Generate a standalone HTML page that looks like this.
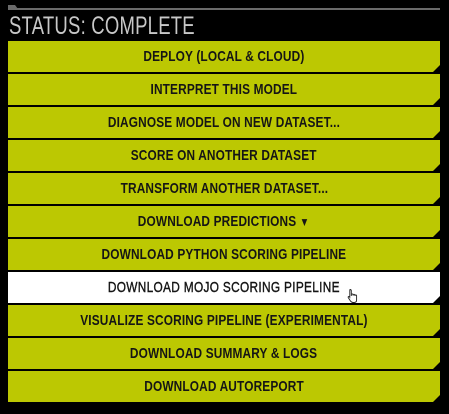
<!DOCTYPE html>
<html><head><style>
html,body{margin:0;padding:0;background:#000;width:449px;height:414px;overflow:hidden}
.top{position:absolute;left:8px;top:8px;width:432px;height:2px;background:#6a6a6a}
.tab{position:absolute;left:8px;top:5px;width:10px;height:4px;background:#6a6a6a;clip-path:polygon(0 0,70% 0,100% 100%,0 100%)}
.title{position:absolute;left:9px;top:12px;font-family:"Liberation Sans",sans-serif;font-size:25px;color:#c8c8c8;transform:scaleX(0.74);transform-origin:left;letter-spacing:0.3px;white-space:nowrap}
.b{position:absolute;left:8px;width:432px;height:31px;background:#bcc802;clip-path:polygon(0 0,100% 0,100% calc(100% - 7px),calc(100% - 7px) 100%,0 100%);display:flex;align-items:center;justify-content:center}
.b span{font-family:"Liberation Sans",sans-serif;font-weight:bold;font-size:15px;color:#151515;transform:scaleX(0.79);white-space:nowrap;letter-spacing:0.2px}
.w{background:#fff}
</style></head><body>
<div class="tab"></div><div class="top"></div>
<div class="title">STATUS: COMPLETE</div>
<div class="b" style="top:41px"><span>DEPLOY (LOCAL &amp; CLOUD)</span></div>
<div class="b" style="top:74px"><span>INTERPRET THIS MODEL</span></div>
<div class="b" style="top:107px"><span>DIAGNOSE MODEL ON NEW DATASET...</span></div>
<div class="b" style="top:140px"><span>SCORE ON ANOTHER DATASET</span></div>
<div class="b" style="top:173px"><span>TRANSFORM ANOTHER DATASET...</span></div>
<div class="b" style="top:206px"><span>DOWNLOAD PREDICTIONS <span style="font-size:12px">&#9660;</span></span></div>
<div class="b" style="top:239px"><span>DOWNLOAD PYTHON SCORING PIPELINE</span></div>
<div class="b w" style="top:272px"><span style="font-weight:normal;-webkit-text-stroke:0.4px #151515;letter-spacing:0.4px">DOWNLOAD MOJO SCORING PIPELINE</span></div>
<div class="b" style="top:305px"><span>VISUALIZE SCORING PIPELINE (EXPERIMENTAL)</span></div>
<div class="b" style="top:338px"><span>DOWNLOAD SUMMARY &amp; LOGS</span></div>
<div class="b" style="top:371px"><span>DOWNLOAD AUTOREPORT</span></div>
<svg style="position:absolute;left:347px;top:288px" width="14" height="16" viewBox="0 0 14 16"><path d="M3 1.5c.8 0 1.3.5 1.3 1.3V8V6.5c0-.7 1.8-.7 1.8 0v1.2V6.8c0-.7 1.8-.7 1.8 0v1.2V7.5c0-.7 1.7-.7 1.7 0V12c0 1.5-1 2.5-2.5 2.5H6C4.6 14.5 4 13.7 3.3 12.7L1.2 9.5c-.4-.7.5-1.4 1.1-.8l.5.6V2.8c0-.8.2-1.3.2-1.3z" fill="#fff" stroke="#222" stroke-width="0.9"/></svg>
</body></html>
